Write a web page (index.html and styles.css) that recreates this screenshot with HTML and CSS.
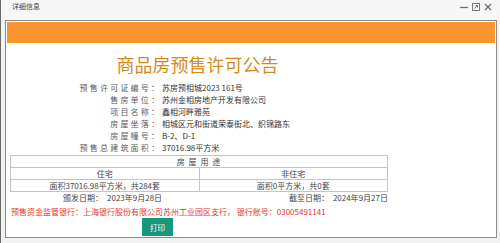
FILE: index.html
```html
<!DOCTYPE html>
<html lang="zh-CN">
<head>
    <meta charset="UTF-8">
    <meta name="viewport" content="width=device-width, initial-scale=1.0">
    <title>详细信息</title>
    <link rel="stylesheet" href="styles.css">
</head>
<body>
    <div class="window">
        <div class="titlebar">
            <span class="titlebar-text">详细信息</span>
            <div class="controls">
                <svg width="8" height="8" viewBox="0 0 8 8"><path d="M0 4.5H8" stroke="#666" stroke-width="1.2"/></svg>
                <svg width="8" height="8" viewBox="0 0 8 8"><rect x="0.5" y="0.5" width="7" height="7" fill="none" stroke="#777"/><path d="M2.5 5.5L5.5 2.5M3.5 2.5H5.5V4.5" fill="none" stroke="#777"/></svg>
                <svg width="8" height="8" viewBox="0 0 8 8"><path d="M1 1L7 7M7 1L1 7" stroke="#666" stroke-width="1.1"/></svg>
            </div>
        </div>

        <div class="panel">
            <div class="band"></div>
            <div class="content">
                <h1 class="notice-title">商品房预售许可公告</h1>

                <div class="info">
                    <div class="info-row"><span class="label">预售许可证编号</span><span class="colon">：</span><span class="value">苏房预相城2023 161号</span></div>
                    <div class="info-row"><span class="label">售房单位</span><span class="colon">：</span><span class="value">苏州金相房地产开发有限公司</span></div>
                    <div class="info-row"><span class="label">项目名称</span><span class="colon">：</span><span class="value">鑫相河畔雅苑</span></div>
                    <div class="info-row"><span class="label">房屋坐落</span><span class="colon">：</span><span class="value">相城区元和街道荣泰街北、织锦路东</span></div>
                    <div class="info-row"><span class="label">房屋幢号</span><span class="colon">：</span><span class="value">B-2、D-1</span></div>
                    <div class="info-row"><span class="label">预售总建筑面积</span><span class="colon">：</span><span class="value">37016.98平方米</span></div>
                </div>

                <table class="usage">
                    <tr><th colspan="2">房 屋 用 途</th></tr>
                    <tr><td>住宅</td><td>非住宅</td></tr>
                    <tr><td>面积37016.98平方米，共284套</td><td>面积0平方米，共0套</td></tr>
                </table>

                <div class="dates">
                    <div class="date-issued"><span>颁发日期：</span><span class="date">2023年9月28日</span></div>
                    <div class="date-expire"><span>截至日期：</span><span class="date">2024年9月27日</span></div>
                </div>
            </div>

            <div class="bank">预售资金监管银行：上海银行股份有限公司苏州工业园区支行， 银行账号：03005491141</div>

            <div class="actions">
                <button class="print-btn">打印</button>
            </div>
        </div>
    </div>
</body>
</html>
```

FILE: styles.css
```css
/* Base */
* {
    margin: 0;
    padding: 0;
    box-sizing: border-box;
}

body {
    width: 500px;
    height: 243px;
    overflow: hidden;
    background: #f2f2f2;
    font-family: "Noto Sans CJK SC", "Noto Sans", sans-serif;
    color: #333;
}

.window {
    height: 243px;
    border-left: 1px solid #6b6b6b;
}

/* Title bar */
.titlebar {
    height: 20px;
    display: flex;
    justify-content: space-between;
    align-items: flex-start;
    padding: 2px 8px 0 11px;
    background: #f7f7f7;
}

.titlebar-text {
    font-size: 7px;
    line-height: 8px;
    color: #444;
}

.controls {
    display: flex;
    gap: 4px;
    padding-top: 1px;
}

/* Panel */
.panel {
    margin: 0 3px 0 4px;
    padding: 1px;
    background: #fff;
    border: 1px solid #8c8c8c;
}

.band {
    height: 21px;
    background: #f7962e;
}

.content {
    width: 381px;
}

.notice-title {
    margin-top: 9px;
    font-size: 18px;
    line-height: 24px;
    font-weight: normal;
    text-align: center;
    color: #d68a1c;
}

/* Info rows */
.info {
    margin-top: 6px;
    font-size: 8px;
    line-height: 12px;
}

.info-row {
    display: flex;
}

.label {
    width: 144px;
    text-align: right;
    letter-spacing: 2.2px;
    color: #5a5a5a;
}

.colon {
    width: 11px;
    color: #5a5a5a;
}

.value {
    color: #333;
}

/* Usage table */
.usage {
    margin: 1px 0 0 3px;
    width: 378px;
    border-collapse: collapse;
    table-layout: fixed;
    font-size: 8px;
    color: #444;
}

.usage th,
.usage td {
    height: 12px;
    padding: 0;
    line-height: 10px;
    font-weight: normal;
    text-align: center;
    border: 1px solid #c4c4c4;
}

.usage th {
    letter-spacing: 1px;
}

/* Dates */
.dates {
    display: flex;
    justify-content: space-between;
    font-size: 8px;
    line-height: 12px;
    color: #444;
}

.date-issued {
    padding-left: 56px;
}

.date {
    margin-left: 4px;
}

.bank {
    margin: 2px 0 0 4px;
    font-size: 8px;
    line-height: 12px;
    color: #e8332c;
}

.actions {
    display: flex;
    padding-left: 135px;
}

.print-btn {
    width: 31px;
    height: 18px;
    border: none;
    background: #17977b;
    color: #fff;
    font-family: inherit;
    font-size: 7.5px;
}
```
